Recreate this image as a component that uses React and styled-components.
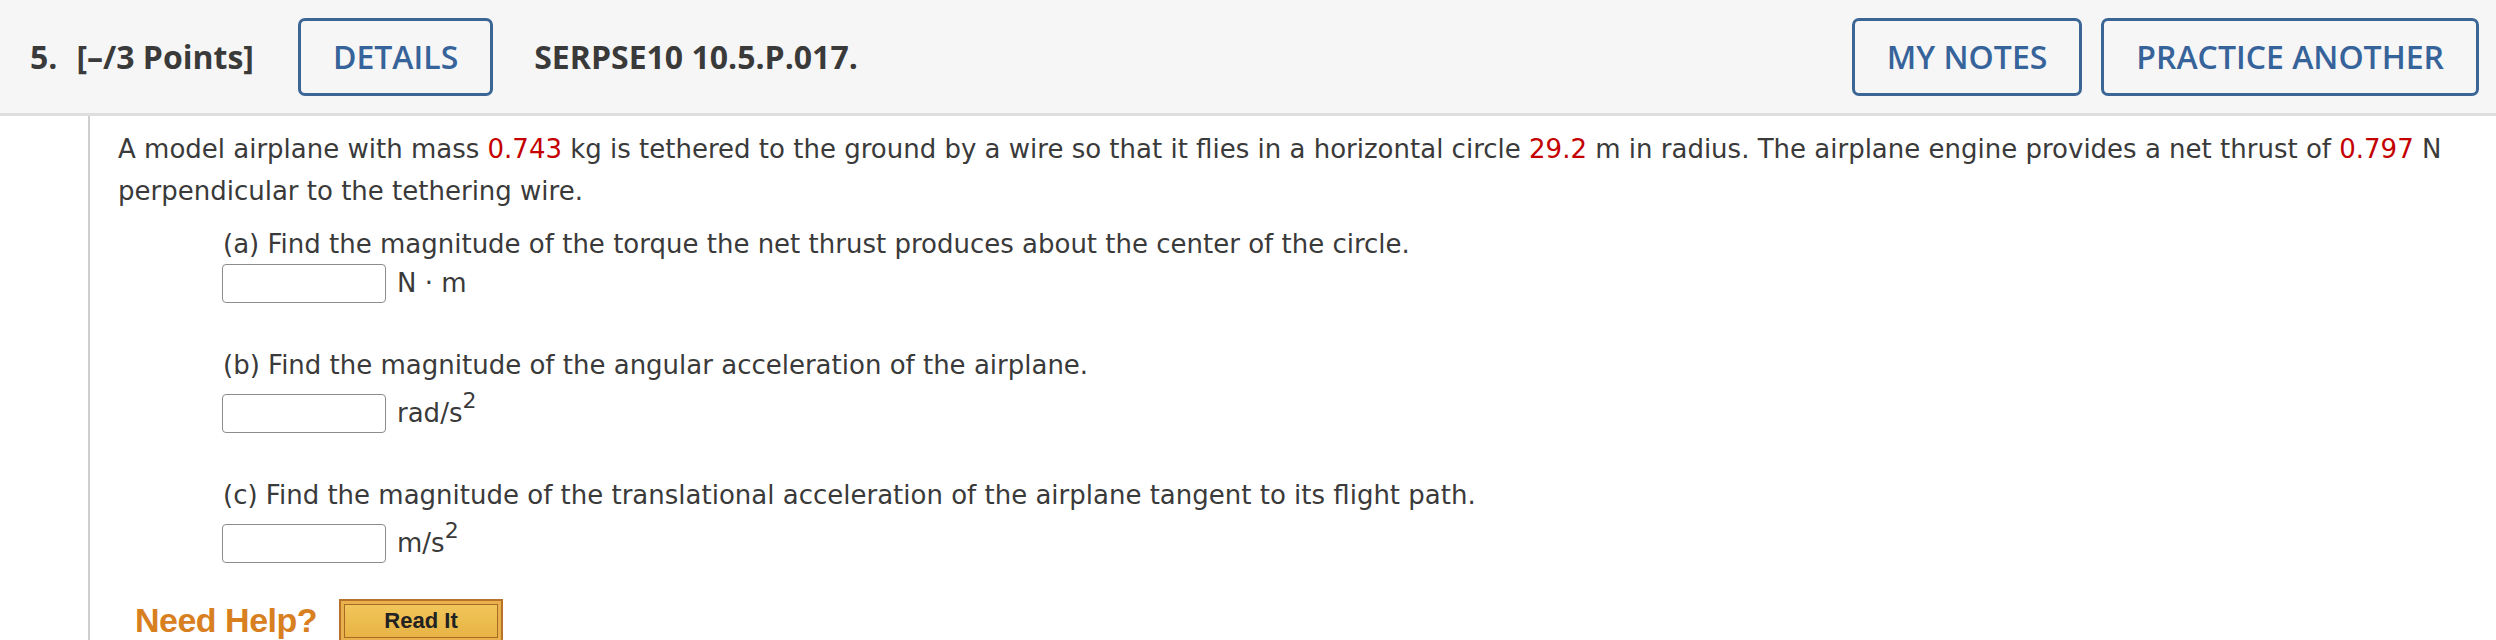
import React from "react";
import styled, { createGlobalStyle } from "styled-components";

const GlobalStyle = createGlobalStyle`
  html, body {
    margin: 0;
    padding: 0;
    background: #fff;
  }
  body {
    width: 2496px;
    height: 640px;
    overflow: hidden;
  }
`;

const parts = [
  {
    label: "(a)",
    text: "Find the magnitude of the torque the net thrust produces about the center of the circle.",
    unit: "N · m",
  },
  {
    label: "(b)",
    text: "Find the magnitude of the angular acceleration of the airplane.",
    unit: "rad/s",
    power: "2",
  },
  {
    label: "(c)",
    text: "Find the magnitude of the translational acceleration of the airplane tangent to its flight path.",
    unit: "m/s",
    power: "2",
  },
];

const App = () => {
  return (
    <>
      <GlobalStyle />
      <Page>
        <Header>
          <Number>5.</Number>
          <Points>[–/3 Points]</Points>
          <OutlineButton>DETAILS</OutlineButton>
          <Code>SERPSE10 10.5.P.017.</Code>
          <Spacer />
          <OutlineButton>MY NOTES</OutlineButton>
          <OutlineButton $gap>PRACTICE ANOTHER</OutlineButton>
        </Header>

        <Body>
          <Prompt>
            A model airplane with mass <Value>0.743</Value> kg is tethered to the
            ground by a wire so that it flies in a horizontal circle{" "}
            <Value>29.2</Value> m in radius. The airplane engine provides a net
            thrust of <Value>0.797</Value> N perpendicular to the tethering wire.
          </Prompt>

          <Parts>
            {parts.map((p) => (
              <Part key={p.label}>
                <Question>
                  {p.label} {p.text}
                </Question>
                <AnswerRow $raised={!!p.power}>
                  <AnswerInput type="text" />
                  <Unit>
                    {p.unit}
                    {p.power && <Sup>{p.power}</Sup>}
                  </Unit>
                </AnswerRow>
              </Part>
            ))}
          </Parts>

          <HelpRow>
            <NeedHelp>Need Help?</NeedHelp>
            <ReadIt>
              <ReadItInner>Read It</ReadItInner>
            </ReadIt>
          </HelpRow>
        </Body>
      </Page>
    </>
  );
};

export default App;

// styles

const Page = styled.div`
  width: 2496px;
  height: 640px;
  display: flex;
  flex-direction: column;
`;

const Header = styled.div`
  height: 113px;
  flex-shrink: 0;
  display: flex;
  align-items: center;
  padding: 0 17px 0 30px;
  background: #f6f6f6;
  border-bottom: 3px solid #dedede;
  font-family: "Open Sans", "Liberation Sans", sans-serif;
  color: #3a3a3a;
`;

const Number = styled.span`
  font-size: 32px;
  font-weight: 700;
  margin-right: 19px;
`;

const Points = styled.span`
  font-size: 32px;
  font-weight: 700;
  margin-right: 44px;
`;

const Code = styled.span`
  font-size: 32px;
  font-weight: 700;
  margin-left: 41px;
`;

const Spacer = styled.div`
  flex: 1;
`;

const OutlineButton = styled.button`
  height: 78px;
  padding: 0 32px;
  margin-left: ${(p) => (p.$gap ? "19px" : "0")};
  background: transparent;
  border: 3px solid #3a6595;
  border-radius: 7px;
  color: #36639a;
  font-family: "Open Sans", "Liberation Sans", sans-serif;
  font-size: 32px;
  font-weight: 600;
  cursor: pointer;
`;

const Body = styled.div`
  flex: 1;
  margin-left: 88px;
  border-left: 2px solid #cfcfcf;
  padding: 12px 0 0 28px;
  font-family: "DejaVu Sans", Verdana, sans-serif;
  font-size: 26px;
  line-height: 42px;
  color: #3a3a3a;
`;

const Prompt = styled.div`
  padding-right: 24px;
`;

const Value = styled.span`
  color: #c40000;
`;

const Parts = styled.div`
  margin-top: 11px;
  padding-left: 105px;
  display: flex;
  flex-direction: column;
  gap: 41px;
`;

const Part = styled.div`
  display: flex;
  flex-direction: column;
`;

const Question = styled.div``;

const AnswerRow = styled.div`
  display: flex;
  align-items: center;
  gap: 11px;
  margin-top: ${(p) => (p.$raised ? "8px" : "-1px")};
`;

const AnswerInput = styled.input`
  width: 164px;
  height: 39px;
  box-sizing: border-box;
  border: 1.5px solid #8c8c8c;
  border-radius: 4px;
  background: #fff;
  margin: 0 0 0 -1px;
`;

const Unit = styled.span`
  font-size: 26px;
  line-height: 39px;
`;

const Sup = styled.sup`
  font-size: 22px;
  line-height: 0;
  vertical-align: 14px;
`;

const HelpRow = styled.div`
  margin-top: 36px;
  padding-left: 17px;
  display: flex;
  align-items: flex-start;
  gap: 22px;
`;

const NeedHelp = styled.span`
  font-family: "Liberation Sans", Arial, sans-serif;
  font-size: 34px;
  font-weight: 700;
  line-height: 40px;
  margin-top: 1px;
  color: #d8801f;
  letter-spacing: -0.5px;
`;

const ReadIt = styled.div`
  width: 164px;
  height: 44px;
  box-sizing: border-box;
  border: 2px solid #b8722a;
  background: #e9b14c;
  padding: 3px;
`;

const ReadItInner = styled.div`
  height: 100%;
  box-sizing: border-box;
  border: 1px solid #a86a25;
  background: linear-gradient(#f1c65a, #e8b345);
  display: flex;
  justify-content: center;
  align-items: center;
  font-family: "Liberation Sans", Arial, sans-serif;
  font-size: 22px;
  font-weight: 700;
  color: #222;
`;
